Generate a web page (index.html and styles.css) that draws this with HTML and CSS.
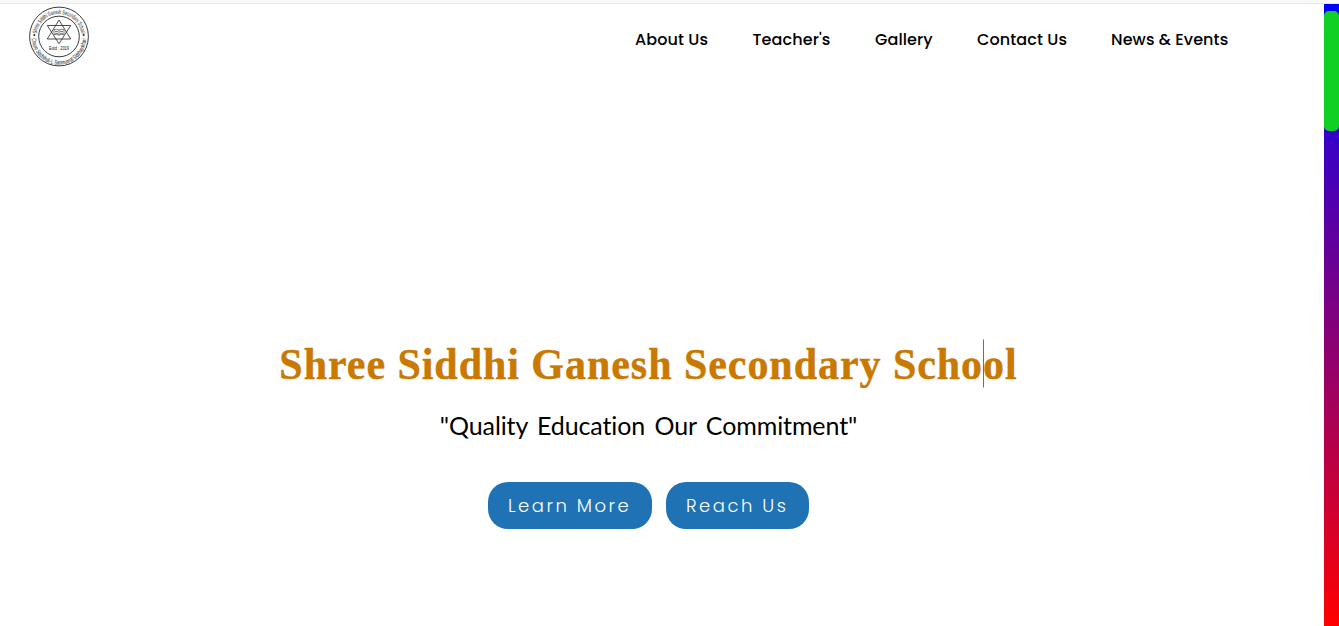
FILE: index.html
```html
<!DOCTYPE html>
<html lang="en">
<head>
<meta charset="utf-8">
<title>Shree Siddhi Ganesh Secondary School</title>
<link rel="stylesheet" href="styles.css">
</head>
<body>
<div class="topline"></div>
<div class="page">
  <div class="content">
    <header class="header">
      <svg class="logo" viewBox="0 0 60 60" aria-label="School seal">
        <defs>
          <path id="arc-top" d="M7.500 30a22.500 22.500 0 0 1 45 0"/>
          <path id="arc-bottom" d="M2.800 31a27.200 27.200 0 0 0 54.400 0"/>
        </defs>
        <g fill="none" stroke="#222">
          <circle cx="30" cy="30" r="29.4" stroke-width=".9"/>
          <circle cx="30" cy="30" r="20.3" stroke-width=".9"/>
          <path d="M30 13.5 41.7 32.5H18.3zM30 37.2 18.3 19H41.7z" stroke-width=".8"/>
          <path d="M25 23.2q2.5-1 5 .4 2.5-1.4 5-.4v5q-2.500-1-5 .4-2.500-1.400-5-.4zM30 23.600v5M26 25h3M26 26.800h3M31 25h3M31 26.800h3" stroke-width=".6"/>
        </g>
        <text class="seal-text"><textPath href="#arc-top" startOffset="3" textLength="64.500" lengthAdjust="spacingAndGlyphs">Shree Siddhi Ganesh Secondary School</textPath></text>
        <text class="seal-text"><textPath href="#arc-bottom" startOffset="1" textLength="83" lengthAdjust="spacingAndGlyphs">Chapro Siddhithali-1, Sammunnat Siddhapokhari</textPath></text>
        <text class="seal-year" x="30" y="43.300" textLength="20" lengthAdjust="spacingAndGlyphs">Estd : 2019</text>
        <circle cx="5.300" cy="28.500" r="1" fill="#222"/><circle cx="54.700" cy="28.500" r="1" fill="#222"/>
      </svg>
      <nav class="nav">
        <a class="about">About Us</a><a class="teachers">Teacher's</a><a class="gallery">Gallery</a><a class="contact">Contact Us</a><a class="news">News &amp; Events</a>
      </nav>
    </header>
    <main class="hero">
      <h1 class="title">Shree Siddhi Ganesh Secondary Scho<span class="caret"></span>ol</h1>
      <p class="motto">"Quality Education Our Commitment"</p>
      <div class="actions"><a class="button learn">Learn More</a><a class="button reach">Reach Us</a></div>
    </main>
  </div>
  <div class="scrollbar"><div class="thumb"></div></div>
</div>
</body>
</html>
```
FILE: styles.css
```css
* { box-sizing: border-box; }
body { margin: 0; background: #fff; color: #000; height: 626px; overflow: hidden; }
.topline { height: 4px; background: #f8f8f8; border-bottom: 1px solid #e8e8e8; }
.page { display: flex; height: 622px; }
.content { flex: 1; }
.header { display: flex; justify-content: space-between; height: 70px; padding: 2px 95px 0 29px; }
.logo { width: 60px; height: 61px; }
.seal-text { font: 6.2px "Liberation Sans", sans-serif; fill: #111; }
.seal-year { font: 5.2px "Liberation Sans", sans-serif; fill: #111; text-anchor: middle; }
.nav { display: flex; gap: 44px; padding-top: 22px; font: 500 16px/24px Poppins, Inter, sans-serif; letter-spacing: .1px; white-space: nowrap; }
.about { width: 73.500px; }
.teachers { width: 78.500px; }
.gallery { width: 58px; }
.contact { width: 90px; }
.news { width: 118px; }
.hero { display: flex; flex-direction: column; align-items: center; padding: 262px 27px 0 0; }
.title { margin: 0; font: bold 42px/56px "Liberation Serif", serif; letter-spacing: .95px; color: #c97800; -webkit-text-stroke: .4px #c97800; white-space: nowrap; transform: scaleY(1.07); }
.caret { display: inline-block; width: 1px; height: 45px; margin-right: -1px; background: #8f6a2c; vertical-align: -8px; }
.motto { margin: 13px 0 0; font: 25px/40px "Comic Sans MS", Lato, sans-serif; letter-spacing: -.1px; word-spacing: 3px; white-space: nowrap; }
.actions { display: flex; gap: 14px; margin-top: 37px; }
.button { height: 47px; padding-left: 20px; border-radius: 20px; background: #1f72b4; color: #fff; font: 300 18px/47px Poppins, Inter, sans-serif; letter-spacing: 2.5px; white-space: nowrap; }
.learn { width: 164px; }
.reach { width: 143px; }
.scrollbar { width: 15px; padding-top: 7px; background: linear-gradient(#00f, #f00); }
.thumb { height: 120px; border-radius: 5px; background: #10d024; }
```
